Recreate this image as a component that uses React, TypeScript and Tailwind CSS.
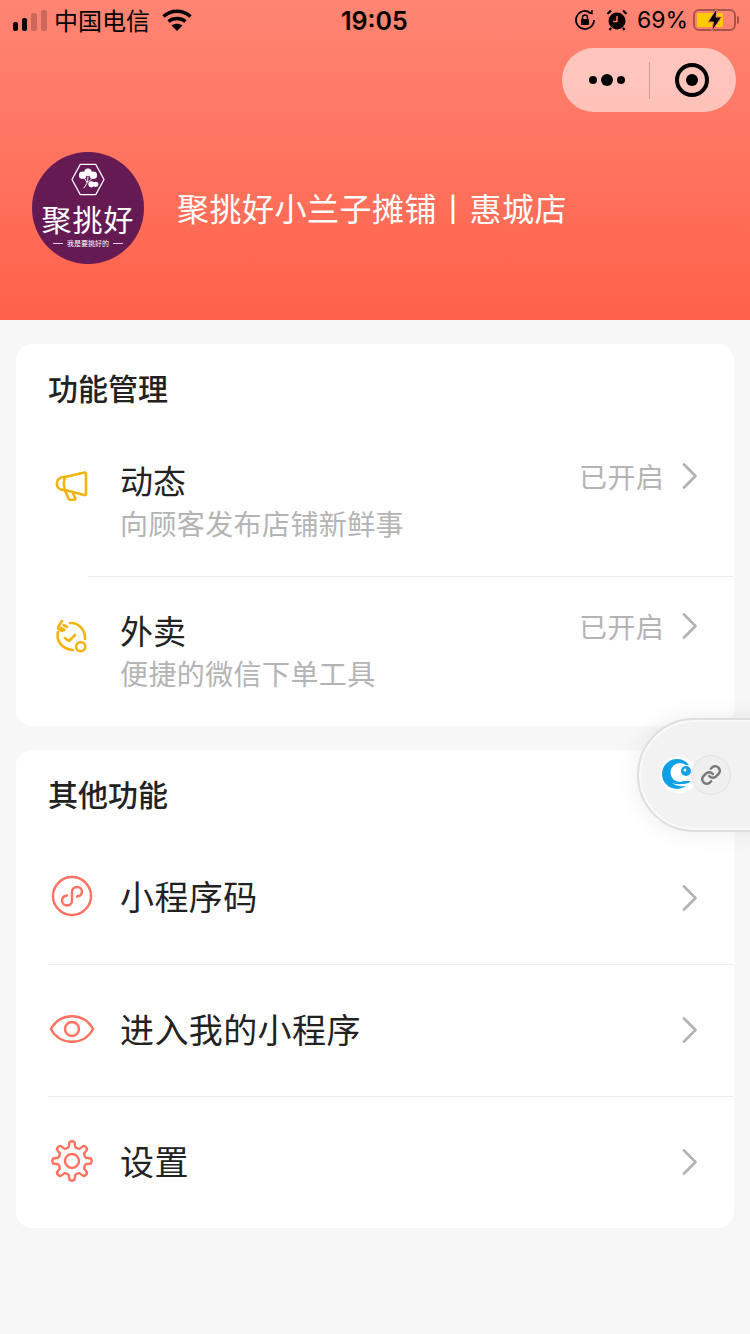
import type { ReactNode } from 'react';

const CORAL = '#ff7160';
const AMBER = '#f2b40c';

function gearPath(cx: number, cy: number, outer: number, inner: number, teeth: number) {
  const pts: string[] = [];
  const step = (Math.PI * 2) / teeth;
  const pt = (a: number, r: number) =>
    `${(cx + Math.sin(a) * r).toFixed(2)} ${(cy - Math.cos(a) * r).toFixed(2)}`;
  for (let i = 0; i < teeth; i++) {
    const a = i * step;
    pts.push(`${i === 0 ? 'M' : 'L'}${pt(a - step * 0.3, inner)}`);
    pts.push(`L${pt(a - step * 0.17, outer)}`);
    pts.push(`Q${pt(a, outer + 1.6)} ${pt(a + step * 0.17, outer)}`);
    pts.push(`L${pt(a + step * 0.3, inner)}`);
    pts.push(`Q${pt(a + step * 0.5, inner - 1)} ${pt(a + step * 0.7, inner)}`);
  }
  return pts.join(' ') + 'Z';
}

function Chevron() {
  return (
    <svg width="16" height="26" viewBox="0 0 16 26" fill="none" className="shrink-0">
      <path d="M2 1.5 13.5 13 2 24.5" stroke="#b2b2b2" strokeWidth="2.6" strokeLinecap="round" strokeLinejoin="round" />
    </svg>
  );
}

function MegaphoneIcon() {
  return (
    <svg width="40" height="40" viewBox="0 0 40 40" fill="none" stroke={AMBER} strokeWidth="2.6" strokeLinejoin="round" strokeLinecap="round">
      <path d="M14 11 33.500 6.500Q35 6.200 35 7.800V27.800Q35 29.400 33.400 28.900L14 24C9 24.400 5.800 21.500 5.800 17.500 5.800 13.600 9 10.700 14 11Z" />
      <path d="M14 11Q11.800 17.500 14 24" />
      <path d="M13.800 24 17.500 32.600Q18.200 33.800 19.500 33.800H22.800Q24.800 33.600 24.200 31.800L21.400 26" />
    </svg>
  );
}

function DeliveryIcon() {
  return (
    <svg width="40" height="40" viewBox="0 0 40 40" fill="none" stroke={AMBER} strokeWidth="2.6" strokeLinecap="round" strokeLinejoin="round">
      <path d="M11 5 7.500 10.500Q6.500 12.500 8.500 13.500L11.500 15" />
      <path d="M12.500 9 16 11" />
      <path d="M10 12 13.500 14" />
      <path d="M7 16C5 24 10 33 22 34" />
      <path d="M19 7C27 6.500 33.500 13 34 21V23" />
      <circle cx="29.700" cy="30.700" r="4.600" />
      <path d="M14 22 18 25 24 19" />
    </svg>
  );
}

function MiniProgramIcon() {
  return (
    <svg width="44" height="44" viewBox="0 0 44 44" fill="none" stroke={CORAL} strokeWidth="2.4" strokeLinecap="round">
      <circle cx="22" cy="22" r="19" />
      <path d="M17 21.500C14 22 12 24 12 26.500 12 29.500 14.500 31.500 17 31.500 20 31.500 22 29 22 26V18C22 15 24 13 27 13 30 13 32 15 32 17.500 32 20 30 22 27 22.500" />
    </svg>
  );
}

function EyeIcon() {
  return (
    <svg width="46" height="30" viewBox="0 0 46 30" fill="none" stroke={CORAL} strokeWidth="2.4">
      <path d="M1.800 15C6.600 6.600 14 2.200 23 2.200S39.400 6.600 44.200 15C39.400 23.400 32 27.800 23 27.800S6.600 23.400 1.800 15Z" strokeLinejoin="round" />
      <circle cx="23" cy="15" r="7" />
    </svg>
  );
}

function GearIcon() {
  return (
    <svg width="44" height="44" viewBox="0 0 44 44" fill="none" stroke={CORAL} strokeWidth="2.4" strokeLinejoin="round">
      <path d={gearPath(22, 22, 19, 14.2, 8)} />
      <circle cx="22" cy="22" r="7" />
    </svg>
  );
}

function StatusBar() {
  return (
    <div className="relative flex h-10 items-center justify-between pl-[13px] pr-[11px] text-black">
      <div className="flex items-center">
        <div className="flex items-end gap-[4px]">
          <span className="h-[9px] w-[5px] rounded-[2px] bg-black" />
          <span className="h-[13px] w-[5px] rounded-[2px] bg-black" />
          <span className="h-[18px] w-[6px] rounded-[2px] bg-black/20" />
          <span className="h-[21px] w-[6px] rounded-[2px] bg-black/20" />
        </div>
        <span className="ml-[7px] text-[24px] leading-none">中国电信</span>
        <svg width="30" height="24" viewBox="0 0 30 24" className="ml-[12px]" fill="none" stroke="#000" strokeWidth="3.4">
          <path d="M1.500 8.500C9 1.500 21 1.500 28.500 8.500" />
          <path d="M6.500 13.500C11 9.500 19 9.500 23.500 13.500" />
          <path d="M15 23 9.500 17.500C12.500 15 17.500 15 20.500 17.500Z" fill="#000" stroke="none" />
        </svg>
      </div>
      <span className="absolute left-[341px] top-[9px] font-['Inter',sans-serif] text-[25px] font-semibold leading-[25px]">19:05</span>
      <div className="flex items-center">
        <svg width="22" height="22" viewBox="0 0 22 22" fill="none" stroke="#000" strokeWidth="1.800">
          <path d="M20 11A9 9 0 1 1 17 4.300" />
          <path d="M14.500 3.500 18 4.500 18 1" strokeWidth="1.400" />
          <rect x="7" y="10" width="8" height="6" rx="1" fill="#000" stroke="none" />
          <path d="M8.500 10V8.500A2.500 2.500 0 0 1 13.500 8.500V10" strokeWidth="1.400" />
        </svg>
        <svg width="22" height="22" viewBox="0 0 22 22" className="ml-[10px]">
          <circle cx="11" cy="12" r="8.500" fill="#000" />
          <path d="M11 7V12.500H7" stroke="#ff7a68" strokeWidth="1.500" fill="none" />
          <path d="M1.500 5 5 1.500M17 1.500 20.500 5M5 19 3.500 21M17 19 18.500 21" stroke="#000" strokeWidth="2.200" />
        </svg>
        <span className="ml-[9px] font-['Inter',sans-serif] text-[23px] leading-none">69%</span>
        <div className="relative ml-[5px] flex items-center">
          <div className="h-[22px] w-[43px] rounded-[6px] border-2 border-black/35 p-[2px]">
            <div className="h-full w-[26px] rounded-[2px] bg-[#ffcc00]" />
          </div>
          <span className="ml-[1px] h-[8px] w-[2px] rounded-r-[2px] bg-black/35" />
          <svg width="16" height="24" viewBox="0 0 16 24" className="absolute left-[14px] top-[-1px]">
            <path d="M10 0 1 14H6.500L4.500 24 14.500 9H9Z" fill="#000" stroke="#ff7a68" strokeWidth="1" />
          </svg>
        </div>
      </div>
    </div>
  );
}

function Capsule() {
  return (
    <div className="mr-[14px] mt-2 flex h-16 w-[174px] items-center self-end rounded-full bg-white/55">
      <div className="flex h-[37px] w-[88px] items-center justify-center gap-[4px] border-r border-black/20 pl-[3px]">
        <span className="size-[8px] rounded-full bg-black" />
        <span className="size-[12px] rounded-full bg-black" />
        <span className="size-[8px] rounded-full bg-black" />
      </div>
      <div className="flex flex-1 items-center justify-center pr-[2px]">
        <span className="flex size-[34px] items-center justify-center rounded-full border-[4px] border-black">
          <span className="size-[12px] rounded-full bg-black" />
        </span>
      </div>
    </div>
  );
}

function LogoAvatar() {
  return (
    <div className="flex size-28 shrink-0 flex-col items-center rounded-full bg-[#651a54] pt-[11px] text-white">
      <svg width="36" height="33" viewBox="0 0 36 34" fill="none" stroke="#fff" strokeWidth="1.300">
        <path d="M10 1.500H26L34.500 17 26 32.500H10L1.500 17Z" />
        <circle cx="12.500" cy="12.500" r="3.200" fill="#fff" />
        <circle cx="18" cy="9.500" r="3.200" fill="#fff" />
        <circle cx="23.500" cy="12.500" r="3.200" fill="#fff" />
        <path d="M18 14C18 20 16 23 13.500 26M14 15 17 20M23 15 18 20" strokeWidth="1" />
        <circle cx="21.500" cy="22" r="2.500" fill="#fff" />
        <circle cx="26" cy="22" r="2" fill="#fff" />
      </svg>
      <span className="mt-[4px] text-[30px] font-normal leading-[36px] tracking-[1px]">聚挑好</span>
      <div className="mt-[3px] flex items-center gap-[4px]">
        <span className="h-px w-[10px] bg-white/80" />
        <span className="text-[7px] leading-[8px]">我是要挑好的</span>
        <span className="h-px w-[10px] bg-white/80" />
      </div>
    </div>
  );
}

function Row({ icon, title, sub, right, inset }: { icon: ReactNode; title: string; sub?: string; right?: string; inset?: boolean }) {
  if (sub) {
    return (
      <div className="flex h-[149px] pt-[30px]">
        <div className="w-[104px] shrink-0 pl-[35px] pt-[9px]">{icon}</div>
        <div className="flex-1">
          <div className="text-[33px] leading-[46px] text-[#222]">{title}</div>
          <div className="text-[28px] leading-[40px] tracking-[0.4px] text-[#b4b4b4]">{sub}</div>
        </div>
        <div className="flex h-[38px] items-center gap-[18px] pr-[36px]">
          <span className="text-[28px] tracking-[0.3px] text-[#b4b4b4]">{right}</span>
          <Chevron />
        </div>
      </div>
    );
  }
  return (
    <div className={`flex h-[132px] items-center pr-[36px] ${inset ? 'border-t border-[#ececec]' : ''}`}>
      <div className="flex w-[48px] shrink-0 justify-center pb-[4px]">{icon}</div>
      <div className="flex-1 pb-[4px] pl-[24px]">
        <span className="text-[34px] leading-[46px] tracking-[0.4px] text-[#222]">{title}</span>
      </div>
      <div className="flex pb-[1px]">
        <Chevron />
      </div>
    </div>
  );
}

function FloatingWidget() {
  return (
    <div className="absolute left-[637px] top-[718px] flex h-[114px] w-[130px] items-center rounded-l-[57px] border-2 border-[#dedede] bg-[#f2f2f2] pl-[21px] shadow-[0_0_24px_rgba(0,0,0,0.08),inset_0_0_0_2px_#fafafa]">
      <svg width="38" height="38" viewBox="0 0 38 38" className="shrink-0">
        <circle cx="19" cy="19" r="18.500" fill="#fff" />
        <circle cx="17" cy="18" r="15" fill="#0ea1e6" />
        <circle cx="20" cy="16.500" r="9.500" fill="#fff" />
        <rect x="22" y="9" width="10" height="16" fill="#fff" />
        <path d="M12 27Q20 30 32 26V29Q20 32.500 12 27Z" fill="#fff" />
        <circle cx="26" cy="15" r="5" fill="#0ea1e6" />
        <circle cx="25" cy="14" r="1.500" fill="#fff" />
      </svg>
      <div className="ml-[-7px] flex size-10 shrink-0 items-center justify-center rounded-full border border-[#e2e2e2] bg-[#efefef]">
        <svg width="22" height="22" viewBox="0 0 24 24" fill="none" stroke="#777" strokeWidth="2.600" strokeLinecap="round">
          <path d="M10 13a5 5 0 0 0 7.500.5l3-3a5 5 0 0 0-7-7l-1.700 1.700" />
          <path d="M14 11a5 5 0 0 0-7.500-.5l-3 3a5 5 0 0 0 7 7l1.700-1.700" />
        </svg>
      </div>
    </div>
  );
}

export default function App() {
  return (
    <div className="relative h-[1334px] w-[750px] overflow-hidden bg-[#f7f7f7] font-['Noto_Sans_CJK_SC','Noto_Sans',sans-serif]">
      <header className="flex h-[320px] flex-col bg-gradient-to-b from-[#ff8573] to-[#ff6049]">
        <StatusBar />
        <Capsule />
        <div className="mt-10 flex items-center pl-8">
          <LogoAvatar />
          <h1 className="ml-[33px] pb-[2px] text-[32px] font-normal leading-[44px] tracking-[0.5px] text-white">聚挑好小兰子摊铺丨惠城店</h1>
        </div>
      </header>

      <main className="flex flex-col gap-6 px-4 pt-6">
        <section className="h-[382px] rounded-2xl bg-white">
          <h2 className="flex h-[83px] items-center pl-[32px] pt-[4px] text-[30px] font-medium text-[#222]">功能管理</h2>
          <Row icon={<MegaphoneIcon />} title="动态" sub="向顾客发布店铺新鲜事" right="已开启" />
          <div className="ml-[72px] h-px bg-[#ececec]" />
          <Row icon={<DeliveryIcon />} title="外卖" sub="便捷的微信下单工具" right="已开启" />
        </section>

        <section className="h-[478px] rounded-2xl bg-white">
          <h2 className="flex h-[82px] items-center pl-[32px] pt-[5px] text-[30px] font-medium text-[#222]">其他功能</h2>
          <div className="pl-[32px]">
            <Row icon={<MiniProgramIcon />} title="小程序码" />
            <Row icon={<EyeIcon />} title="进入我的小程序" inset />
            <Row icon={<GearIcon />} title="设置" inset />
          </div>
        </section>
      </main>

      <FloatingWidget />
    </div>
  );
}
